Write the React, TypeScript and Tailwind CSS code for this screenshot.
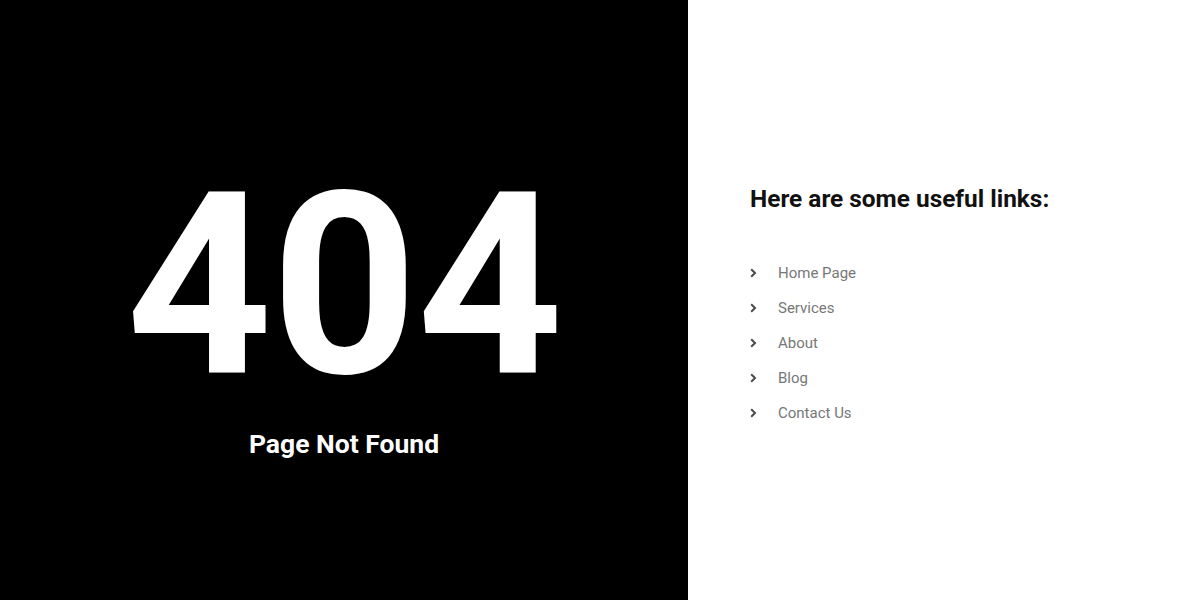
import React from "react";

const links = ["Home Page", "Services", "About", "Blog", "Contact Us"];

function Chevron() {
  return (
    <svg width="7" height="10" viewBox="0 0 7 10" className="shrink-0">
      <path d="M1.2 1.3 L5 5 L1.2 8.7" fill="none" stroke="#4a4a4a" strokeWidth="2" />
    </svg>
  );
}

export default function App() {
  return (
    <div className="flex h-[600px] w-[1200px] font-['Roboto',sans-serif]">
      <div className="flex w-[688px] flex-col items-center justify-center bg-black pt-[16px]">
        <div className="text-[255px] font-bold leading-none tracking-[-1px] text-white">404</div>
        <div className="mt-[18px] text-[26.5px] font-bold leading-none text-white">Page Not Found</div>
      </div>
      <div className="flex flex-1 flex-col justify-center bg-white pl-[62px] pt-[9px]">
        <h2 className="text-[24.4px] font-bold leading-none text-[#111]">Here are some useful links:</h2>
        <ul className="mt-[52px] flex flex-col gap-[17px]">
          {links.map((l) => (
            <li key={l} className="flex items-center gap-[21px] text-[15px] leading-[18px] text-[#777]">
              <Chevron />
              <span>{l}</span>
            </li>
          ))}
        </ul>
      </div>
    </div>
  );
}
